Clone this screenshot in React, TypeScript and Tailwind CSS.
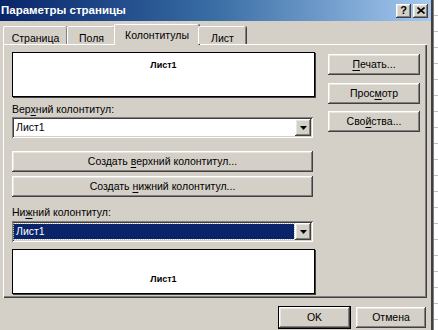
import React from 'react';

const raised =
  'bg-[#d4d0c8] shadow-[inset_-1px_-1px_#404040,inset_1px_1px_#ffffff,inset_-2px_-2px_#808080,inset_2px_2px_#e8e6e0]';
const sunken =
  'shadow-[inset_1px_1px_#808080,inset_-1px_-1px_#ffffff,inset_2px_2px_#404040,inset_-2px_-2px_#d4d0c8]';

const U = ({ children }: { children: React.ReactNode }) => <span className="underline underline-offset-2">{children}</span>;

const Btn = ({ children, className = '' }: { children: React.ReactNode; className?: string }) => (
  <div className={`${raised} flex items-center justify-center text-black ${className}`}>
    <span className="whitespace-pre">{children}</span>
  </div>
);

const Arrow = () => (
  <svg width="7" height="4" viewBox="0 0 7 4" aria-hidden="true">
    <path d="M0 0h7L3.5 4z" fill="#000" />
  </svg>
);

const Combo = ({ selected = false }: { selected?: boolean }) => (
  <div className={`${sunken} bg-white h-[21px] w-[301px] flex items-center pl-[2px] pr-[2px]`}>
    <div className="flex-1 h-[15px] flex items-center">
      {selected ? (
        <div className="h-[15px] w-full bg-[#0a246a] text-white pl-[2px] outline outline-1 outline-dotted outline-[#c0c0c0] flex items-center">
          Лист1
        </div>
      ) : (
        <span className="pl-[2px]">Лист1</span>
      )}
    </div>
    <div className={`${raised} w-[16px] h-[17px] flex items-center justify-center ml-[1px]`}>
      <Arrow />
    </div>
  </div>
);

const Preview = ({ bottom = false }: { bottom?: boolean }) => (
  <div
    className={`bg-white border border-black shadow-[1px_1px_0_#404040] h-[45px] w-[303px] flex justify-center text-[9px] font-bold ${
      bottom ? 'items-end pb-[7px]' : 'items-start pt-[6px]'
    }`}
  >
    Лист1
  </div>
);

export default function App() {
  const tabs = ['Страница', 'Поля', 'Колонтитулы', 'Лист'];
  const widths = ['w-[64px]', 'w-[48px]', 'w-[85px]', 'w-[48px]'];
  return (
    <div className="w-[438px] h-[330px] flex overflow-hidden bg-[#d4d0c8] font-['Liberation_Sans',sans-serif] text-[10.5px] text-black">
      <div className="w-[433px] h-full flex flex-col border-r-2 border-[#404040] bg-[#d4d0c8]">
        {/* title bar */}
        <div className="h-[21px] flex items-center bg-gradient-to-r from-[#0a246a] via-[#3a6ea5] to-[#a6caf0] pr-[3px]">
          <span className="flex-1 text-white font-bold text-[11.5px] pl-[1px]">
            Параметры страницы
          </span>
          <div className={`${raised} w-[15px] h-[14px] flex items-center justify-center text-[11px] font-bold`}>?</div>
          <div className={`${raised} w-[15px] h-[14px] ml-[2px] flex items-center justify-center`}>
            <svg width="8" height="7" viewBox="0 0 8 7" aria-hidden="true">
              <path d="M0.5 0.5l7 6M7.5 0.5l-7 6" stroke="#000" strokeWidth="1.6" />
            </svg>
          </div>
        </div>

        <div className="flex-1 flex flex-col px-[3px] pt-[2px]">
          {/* tabs */}
          <div className="h-[21px] flex items-end relative z-10">
            {tabs.map((t, i) => {
              const sel = i === 2;
              return (
                <div
                  key={t}
                  className={`${widths[i]} flex justify-center border-t border-l border-white shadow-[inset_-1px_0_#808080,1px_0_#404040] rounded-t-[2px] bg-[#d4d0c8] ${
                    sel ? 'h-[21px] -mb-[1px] pt-[3px] -mx-[1px]' : 'h-[18px] pt-[4px]'
                  }`}
                >
                  {t}
                </div>
              );
            })}
          </div>

          {/* panel */}
          <div className="h-[254px] w-[424px] border-t border-l border-white shadow-[inset_-1px_-1px_#404040,inset_-2px_-2px_#808080] flex pl-[8px] pt-[7px]">
            <div className="w-[305px] flex flex-col">
              <Preview />
              <div className="mt-[5px] h-[14px] leading-[14px]">
                Вер<U>х</U>ний колонтитул:
              </div>
              <div className="mt-[1px]">
                <Combo />
              </div>
              <Btn className="mt-[13px] w-[301px] h-[21px]">
                Создать <U>в</U>ерхний колонтитул...
              </Btn>
              <Btn className="mt-[4px] w-[301px] h-[21px]">
                Создать <U>н</U>ижний колонтитул...
              </Btn>
              <div className="mt-[8px] h-[14px] leading-[14px]">
                Ни<U>ж</U>ний колонтитул:
              </div>
              <div className="mt-[2px]">
                <Combo selected />
              </div>
              <div className="mt-[7px]">
                <Preview bottom />
              </div>
            </div>
            <div className="ml-[11px] pt-[2px] flex flex-col">
              <Btn className="w-[92px] h-[21px]">
                <U>П</U>ечать...
              </Btn>
              <Btn className="mt-[8px] w-[92px] h-[21px]">
                Прос<U>м</U>отр
              </Btn>
              <Btn className="mt-[7px] w-[92px] h-[21px]">
                Сво<U>й</U>ства...
              </Btn>
            </div>
          </div>

          {/* footer buttons */}
          <div className="flex justify-end gap-[6px] mt-[9px] pr-[2px]">
            <Btn className="w-[71px] h-[21px] outline outline-1 outline-black">OK</Btn>
            <Btn className="w-[70px] h-[21px]">Отмена</Btn>
          </div>
        </div>
      </div>

      {/* spreadsheet behind */}
      <div className="flex-1 bg-white flex flex-col border-l border-[#808080]">
        {Array.from({ length: 21 }).map((_, i) => (
          <div key={i} className="h-[16px] shrink-0 border-b border-[#c0c0c0]" />
        ))}
      </div>
    </div>
  );
}
